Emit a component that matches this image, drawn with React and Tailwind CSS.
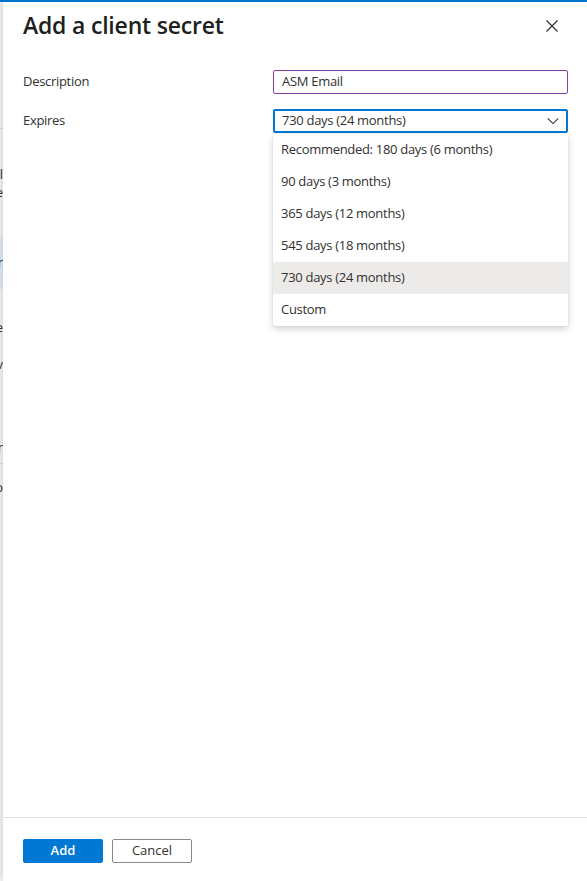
import React from 'react';

const options = [
  'Recommended: 180 days (6 months)',
  '90 days (3 months)',
  '365 days (12 months)',
  '545 days (18 months)',
  '730 days (24 months)',
  'Custom',
];

// bits of the page behind the panel, cut off at the left edge
const Backdrop = () => (
  <div className="w-[3px] shrink-0 overflow-hidden bg-[#f8f8f8] text-[13px] text-[#323130] flex flex-col">
    <div className="h-[127px] shrink-0 border-b border-[#e1dfdd]" />
    <div className="h-[36px] shrink-0" />
    <div className="h-[18px] flex justify-end whitespace-nowrap leading-[18px]">Tunnel</div>
    <div className="h-[18px] flex justify-end whitespace-nowrap leading-[18px]">Secure</div>
    <div className="h-[36px] shrink-0" />
    <div className="h-[52px] shrink-0 bg-[#e5eef8] flex items-center justify-end whitespace-nowrap">Other</div>
    <div className="h-[29px] shrink-0" />
    <div className="h-[18px] flex justify-end whitespace-nowrap leading-[18px]">Module</div>
    <div className="h-[19px] shrink-0" />
    <div className="h-[18px] flex justify-end whitespace-nowrap leading-[18px]">Overv</div>
    <div className="h-[65px] shrink-0" />
    <div className="h-[18px] flex justify-end whitespace-nowrap leading-[18px]">Owner</div>
    <div className="h-[8px] shrink-0 border-b border-[#e1dfdd]" />
    <div className="h-[14px] shrink-0" />
    <div className="h-[18px] flex justify-end whitespace-nowrap leading-[18px]">Auto</div>
    <div className="flex-1" />
  </div>
);

export default function App() {
  return (
    <div
      className="w-[587px] h-[881px] flex flex-col bg-white text-[#323130]"
      style={{ fontFamily: '"Open Sans", "Noto Sans", sans-serif' }}
    >
      <div className="h-[2px] bg-[#0078d4] shrink-0" />
      <div className="flex flex-1 min-h-0">
        <Backdrop />
        <div className="flex-1 flex flex-col bg-white shadow-[-3px_0_6px_rgba(0,0,0,0.12)] relative">
          <div className="flex items-start justify-between pl-[20px] pr-[28px] pt-[8px]">
            <h1 className="text-[23px] font-semibold leading-[30px] text-[#201f1e] tracking-[-0.2px]">Add a client secret</h1>
            <button className="mt-[9px] w-[14px] h-[14px] text-[#323130]">
              <svg viewBox="0 0 14 14" width="14" height="14" fill="none" stroke="currentColor" strokeWidth="1.2">
                <path d="M1.5 1.5l11 11M12.5 1.5l-11 11" />
              </svg>
            </button>
          </div>

          <div className="pl-[20px] pr-[19px] pt-[30px] flex flex-col gap-[15px] text-[13px] tracking-[-0.3px]">
            <div className="flex items-center h-[24px]">
              <label className="w-[250px]">Description</label>
              <div className="flex-1 h-[24px] border border-[#8a3fa6] rounded-[2px] flex items-center px-[8px]">
                ASM Email
              </div>
            </div>
            <div className="flex items-center h-[24px]">
              <label className="w-[250px]">Expires</label>
              <div className="flex-1 relative">
                <div className="h-[24px] border-2 border-[#0078d4] rounded-[2px] flex items-center justify-between pl-[7px] pr-[6px]">
                  <span>730 days (24 months)</span>
                  <svg viewBox="0 0 16 16" width="14" height="14" fill="none" stroke="#323130" strokeWidth="1.2">
                    <path d="M2 5l6 6 6-6" />
                  </svg>
                </div>
                <ul className="absolute left-0 right-0 top-[25px] bg-white rounded-[2px] shadow-[0_3px_7px_rgba(0,0,0,0.18),0_0_2px_rgba(0,0,0,0.1)] z-10">
                  {options.map((o) => (
                    <li
                      key={o}
                      className={`h-[32px] flex items-center px-[8px] ${o === '730 days (24 months)' ? 'bg-[#edebe9]' : ''}`}
                    >
                      {o}
                    </li>
                  ))}
                </ul>
              </div>
            </div>
          </div>

          <div className="flex-1" />
          <div className="border-t border-[#e1dfdd] h-[64px] flex items-center gap-[9px] pl-[20px] pt-[2px]">
            <button className="w-[80px] h-[24px] rounded-[2px] bg-[#0078d4] text-white text-[13px] font-semibold">Add</button>
            <button className="w-[80px] h-[24px] rounded-[2px] border border-[#8a8886] bg-white text-[13px] text-[#323130]">Cancel</button>
          </div>
        </div>
      </div>
    </div>
  );
}
